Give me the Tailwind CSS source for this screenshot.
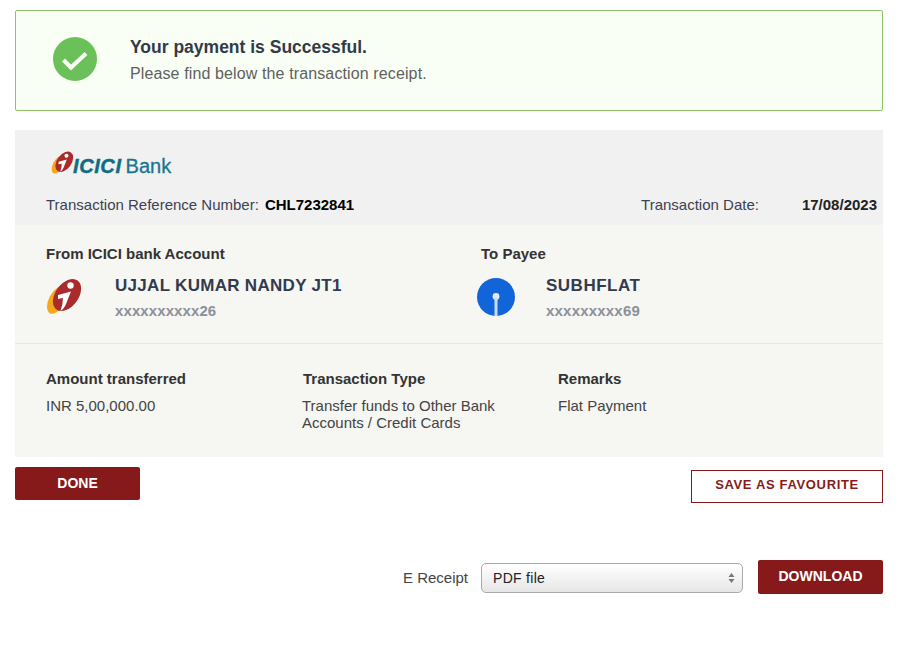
<!DOCTYPE html>
<html lang="en">
<head>
    <meta charset="UTF-8">
    <meta name="viewport" content="width=device-width, initial-scale=1.0">
    <title>Payment receipt</title>
    <script src="https://cdn.jsdelivr.net/npm/@tailwindcss/browser@4"></script>
</head>
<body class="bg-white font-['Liberation_Sans',Arial,sans-serif] text-[15px] text-[#333]">
    <div class="w-[868px] ml-[15px] pt-[10px]">

        <!-- success banner -->
        <div class="h-[101px] flex items-center border border-[#8cc665] rounded-[2px] bg-[#f9fff5]">
            <svg class="w-[44px] h-[44px] ml-[37px] mt-[-4px] shrink-0" viewBox="0 0 44 44">
                <circle cx="22" cy="22" r="22" fill="#6cc05a"/>
                <path d="M10.5 23l7.5 7.5 15-14" fill="none" stroke="#f6fbf3" stroke-width="4.2"/>
            </svg>
            <div class="ml-[33px] mt-[-2px]">
                <p class="text-[17.5px] leading-[20px] font-bold text-[#323a4a]">Your payment is Successful.</p>
                <p class="text-[16px] leading-[18px] mt-[8px] tracking-[0.12px] text-[#5f5f5f]">Please find below the transaction receipt.</p>
            </div>
        </div>

        <!-- receipt header -->
        <div class="mt-[19px] h-[95px] bg-[#f1f1f1]">
            <div class="flex items-end pl-[36px] pt-[16px] h-[46px]">
                <svg class="w-[24px] h-[26px] shrink-0" viewBox="0 0 38 38">
                    <ellipse cx="11" cy="22" rx="8" ry="15" transform="rotate(28 11 22)" fill="#f5a81c"/>
                    <ellipse cx="21" cy="17" rx="11.500" ry="18" transform="rotate(36 21 17)" fill="#a92b2b"/>
                    <circle cx="24.500" cy="7.500" r="3.200" fill="#fff"/>
                    <path d="M12 17l13-3.500-5 12.500q-2 5-5.500 7q2.500-7 2.500-13l-5 1z" fill="#fff"/>
                </svg>
                <span class="ml-[-2px] text-[20px] leading-[20px] font-bold italic text-[#0f6c84] tracking-[0.6px] [-webkit-text-stroke:0.4px_#0f6c84]">ICICI</span>
                <span class="ml-[4px] text-[20px] leading-[20px] text-[#1a7690] [-webkit-text-stroke:0.3px_#1a7690]">Bank</span>
            </div>
            <div class="flex items-center pl-[31px] mt-[20px] h-[18px]">
                <span class="text-[#3c4152]">Transaction Reference Number:</span>
                <span class="ml-[6px] font-bold text-black">CHL7232841</span>
                <span class="ml-auto text-[#3c4152]">Transaction Date:</span>
                <span class="ml-[43px] mr-[6px] font-bold text-[#222]">17/08/2023</span>
            </div>
        </div>

        <!-- receipt details -->
        <div class="h-[232px] bg-[#f6f6f2]">
            <div class="h-[119px] border-b border-[#e6e6e3] flex">
                <div class="w-[435px] pl-[31px] pt-[20px]">
                    <p class="font-bold leading-[18px] text-[#333]">From ICICI bank Account</p>
                    <div class="flex mt-[13px]">
                        <svg class="w-[38px] h-[38px] shrink-0 ml-0 mt-[2px]" viewBox="0 0 38 38">
                            <ellipse cx="11" cy="22" rx="8" ry="15" transform="rotate(28 11 22)" fill="#f5a81c"/>
                            <ellipse cx="21" cy="17" rx="11.500" ry="18" transform="rotate(36 21 17)" fill="#a92b2b"/>
                            <circle cx="24.500" cy="7.500" r="3.200" fill="#fff"/>
                            <path d="M12 17l13-3.500-5 12.500q-2 5-5.500 7q2.500-7 2.500-13l-5 1z" fill="#fff"/>
                        </svg>
                        <div class="ml-[31px]">
                            <p class="text-[17px] leading-[20px] font-bold text-[#323a4e] tracking-[0.3px]">UJJAL KUMAR NANDY JT1</p>
                            <p class="mt-[6px] leading-[18px] font-bold text-[#8c909c] tracking-[0.1px]">xxxxxxxxxx26</p>
                        </div>
                    </div>
                </div>
                <div class="pl-[31px] pt-[20px]">
                    <p class="font-bold leading-[18px] text-[#333]">To Payee</p>
                    <div class="flex mt-[13px]">
                        <svg class="w-[38px] h-[38px] shrink-0 ml-[-4px] mt-[2px]" viewBox="0 0 38 38">
                            <circle cx="19" cy="19" r="19" fill="#1165d8"/>
                            <circle cx="19" cy="18.500" r="3.400" fill="#e6eefb"/>
                            <rect x="17.500" y="19" width="3" height="19" fill="#c9dcf6"/>
                        </svg>
                        <div class="ml-[31px]">
                            <p class="text-[17px] leading-[20px] font-bold text-[#323a4e] tracking-[0.5px]">SUBHFLAT</p>
                            <p class="mt-[6px] leading-[18px] font-bold text-[#8c909c] tracking-[0.2px]">xxxxxxxxx69</p>
                        </div>
                    </div>
                </div>
            </div>
            <div class="flex pl-[31px] pt-[26px]">
                <div class="w-[257px]">
                    <p class="font-bold leading-[18px]">Amount transferred</p>
                    <p class="mt-[9px] leading-[18px] text-[#444]">INR 5,00,000.00</p>
                </div>
                <div class="w-[256px]">
                    <p class="font-bold leading-[18px]">Transaction Type</p>
                    <p class="mt-[9px] leading-[17px] w-[210px] ml-[-1px] text-[#444]">Transfer funds to Other Bank Accounts / Credit Cards</p>
                </div>
                <div class="ml-[-1px]">
                    <p class="font-bold leading-[18px]">Remarks</p>
                    <p class="mt-[9px] leading-[18px] text-[#444]">Flat Payment</p>
                </div>
            </div>
        </div>

        <!-- actions -->
        <div class="flex justify-between items-start mt-[10px]">
            <button class="w-[125px] h-[33px] bg-[#861a1a] rounded-[2px] text-white font-bold text-[14px]">DONE</button>
            <button class="mt-[3px] w-[192px] h-[33px] bg-white border border-[#861a1a] text-[#861a1a] font-bold text-[13px] tracking-[0.65px] pb-[3px]">SAVE AS FAVOURITE</button>
        </div>

        <!-- e receipt -->
        <div class="flex justify-end items-center mt-[57px]">
            <span class="text-[#444] mt-[3px]">E Receipt</span>
            <div class="relative ml-[13px] mt-[2px]">
                <select class="appearance-none block w-[262px] h-[30px] pl-[11px] border border-[#aaa] rounded-[5px] bg-gradient-to-b from-white to-[#e6e6e6] text-[14px] text-[#222] tracking-[0.3px]">
                    <option>PDF file</option>
                </select>
                <svg class="absolute right-[8px] top-[9px] w-[7px] h-[12px] pointer-events-none" viewBox="0 0 7 12">
                    <path d="M3.500 1L6.500 5H.5zM3.500 11L.5 7h6z" fill="#777"/>
                </svg>
            </div>
            <button class="ml-[15px] w-[125px] h-[34px] bg-[#861a1a] rounded-[2px] text-white font-bold text-[14px] pb-[2px]">DOWNLOAD</button>
        </div>
    </div>
</body>
</html>
